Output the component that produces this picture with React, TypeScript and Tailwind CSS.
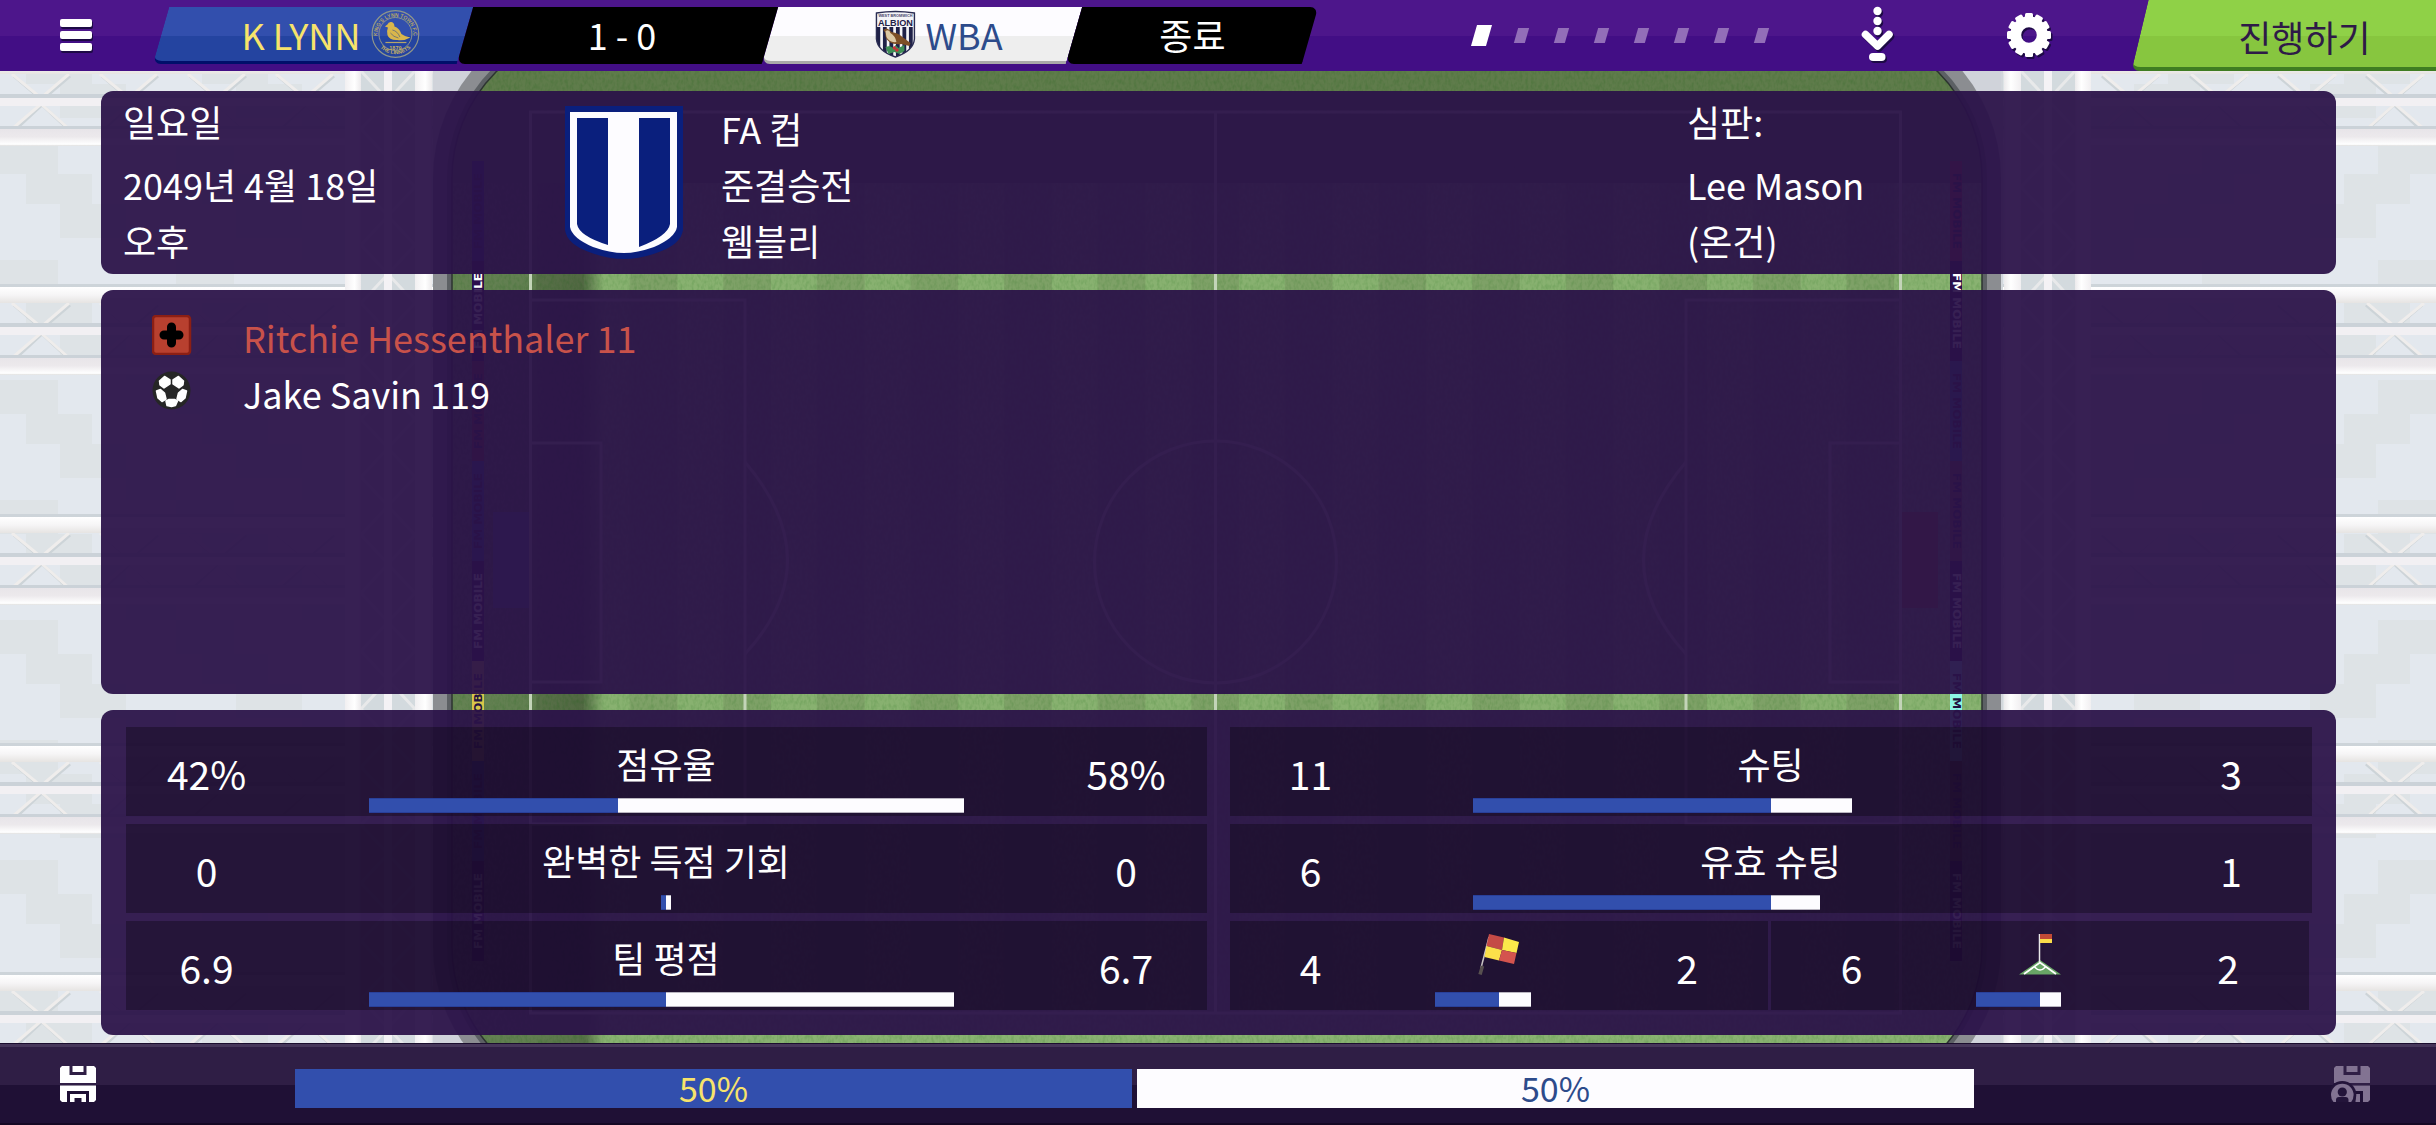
import React from 'react';

const TRUSS_ROWS = [58, 287, 517, 746, 975];
const TRUSS_X = [-1, 0, 1, 2, 3].map((i) => 41 + i * 88);
const BOARD_COLORS = ['#2a2a8a', '#2b0f4d', '#8a3a2a', '#2a5aa0', '#2b0f4d', '#d8c64a', '#2a5aa0', '#2b0f4d'];
const BOARD_COLORS_RIGHT = ['#b03030', '#2b0f4d', '#2a7aa0', '#8a5a3a', '#2b0f4d', '#8cf5e4', '#7a5a2a', '#2b0f4d'];

// One stand; the right stand is this one mirrored
const Stand = () => (
  <g>
    <rect x="0" y="71" width="433" height="975" fill="url(#seats)" />
    {TRUSS_ROWS.map((y) => (
      <g key={y}>
        <rect x="0" y={y - 3} width="433" height="3" fill="#cdd4d9" />
        {TRUSS_X.map((x) => (
          <g key={x} fill="none">
            <path d={`M${x - 27} ${y + 18}L${x + 1} ${y + 42}L${x + 29} ${y + 18}M${x - 27} ${y + 73}L${x + 1} ${y + 47}L${x + 29} ${y + 73}`} stroke="#cdd4d8" strokeWidth="3" />
            <path d={`M${x - 29} ${y + 16}L${x} ${y + 40}L${x + 28} ${y + 16}M${x - 29} ${y + 71}L${x} ${y + 46}L${x + 28} ${y + 71}`} stroke="#efedec" strokeWidth="3" />
          </g>
        ))}
        <rect x="0" y={y + 36} width="433" height="4" fill="#cbd2d8" />
        <rect x="0" y={y + 40} width="433" height="8" fill="#f2f0f3" />
        <rect x="0" y={y + 68} width="433" height="3" fill="#cbd2d8" />
        <rect x="0" y={y} width="433" height="16" fill="url(#pipeDown)" />
        <rect x="0" y={y + 71} width="433" height="17" fill="url(#pipeUp)" />
      </g>
    ))}
    <rect x="361" y="71" width="54" height="975" fill="#d3dade" />
    {Array.from({ length: 17 }, (_, i) => 71 + i * 58).map((y) => (
      <path key={y} d={`M361 ${y}L388 ${y + 29}L361 ${y + 58}M415 ${y}L388 ${y + 29}L415 ${y + 58}`} stroke="#e8e9ea" strokeWidth="3" fill="none" />
    ))}
    <rect x="384" y="71" width="8" height="975" fill="#f4f2f5" />
    <rect x="345" y="71" width="16" height="975" fill="url(#post)" />
    <rect x="415" y="71" width="17" height="975" fill="url(#post)" />
  </g>
);

const Boards = ({ x, rotate, colors, start }: { x: number; rotate: number; colors: string[]; start: number }) => (
  <g>
    {colors.map((color, i) => {
      const y = start + i * 100;
      return (
        <g key={i}>
          <rect x={x} y={y} width="12" height="100" fill={color} />
          <text
            x={x + 6}
            y={y + 50}
            transform={`rotate(${rotate} ${x + 6} ${y + 50})`}
            textAnchor="middle"
            dominantBaseline="central"
            fontFamily="'DejaVu Sans', sans-serif"
            fontWeight="700"
            fontSize="10"
            textLength="76"
            lengthAdjust="spacingAndGlyphs"
            fill={color === '#2b0f4d' ? '#ffffff' : '#221040'}
          >
            FM MOBILE
          </text>
        </g>
      );
    })}
  </g>
);

const Stadium = () => (
  <svg className="absolute inset-0" width="2436" height="1125" viewBox="0 0 2436 1125">
    <defs>
      <pattern id="seats" width="176" height="120" y="20" patternUnits="userSpaceOnUse">
        <rect width="176" height="120" fill="#e3e8ee" />
        <rect width="58" height="34" fill="#dee3e6" />
        <rect x="26" y="34" width="66" height="30" fill="#dee3e6" />
        <rect x="60" y="64" width="66" height="34" fill="#dee3e6" />
        <rect x="126" y="90" width="50" height="30" fill="#dee3e6" />
      </pattern>
      <linearGradient id="pipeDown" x1="0" y1="0" x2="0" y2="1">
        <stop offset="0" stopColor="#ffffff" />
        <stop offset=".5" stopColor="#f6f5f6" />
        <stop offset="1" stopColor="#e6e4e2" />
      </linearGradient>
      <linearGradient id="pipeUp" x1="0" y1="0" x2="0" y2="1">
        <stop offset="0" stopColor="#e8e5e9" />
        <stop offset=".45" stopColor="#ece9ec" />
        <stop offset=".9" stopColor="#ffffff" />
        <stop offset="1" stopColor="#dcdcdc" />
      </linearGradient>
      <linearGradient id="post" x1="0" y1="0" x2="1" y2="0">
        <stop offset="0" stopColor="#f1eff1" />
        <stop offset=".6" stopColor="#ffffff" />
        <stop offset="1" stopColor="#eceaec" />
      </linearGradient>
      <linearGradient id="standShade" x1="0" y1="0" x2="1" y2="0">
        <stop offset="0" stopColor="#000000" stopOpacity=".27" />
        <stop offset=".5" stopColor="#000000" stopOpacity=".29" />
        <stop offset=".88" stopColor="#000000" stopOpacity=".36" />
        <stop offset="1" stopColor="#000000" stopOpacity="0" />
      </linearGradient>
      <pattern id="mow" x="771" width="93.6" height="200" patternUnits="userSpaceOnUse">
        <rect width="94" height="200" fill="#7ea167" />
        <rect width="46" height="200" fill="#88b170" />
      </pattern>
      <filter id="grain" x="0" y="0" width="100%" height="100%">
        <feTurbulence type="fractalNoise" baseFrequency=".35 .2" numOctaves="2" seed="4" />
        <feColorMatrix values="0 0 0 0 0  0 0 0 0 0.1  0 0 0 0 0  0 0 0 -1.4 0.85" />
      </filter>
      <clipPath id="bowl">
        <rect x="452" y="28" width="1530" height="1069" rx="150" />
      </clipPath>
    </defs>
    <rect width="2436" height="1125" fill="#d3d7dc" />
    <Stand />
    <g transform="translate(2436 0) scale(-1 1)">
      <Stand />
    </g>
    <rect x="433" y="71" width="1568" height="975" fill="#d0d3da" />
    <rect x="433" y="10" width="1568" height="1105" rx="168" fill="#8b8d91" />
    <rect x="447" y="23" width="1540" height="1079" rx="155" fill="#5c6064" />
    <g clipPath="url(#bowl)">
      <rect x="452" y="0" width="1530" height="1125" fill="#89b271" />
      <rect x="530" y="180" width="1371" height="834" fill="url(#mow)" />
      <rect x="452" y="71" width="1530" height="112" fill="#5f7c4b" />
      <rect x="452" y="183" width="152" height="942" fill="url(#standShade)" />
      <rect x="452" y="71" width="1530" height="975" filter="url(#grain)" opacity=".22" />
      <g fill="none" stroke="#c3d4b8" strokeWidth="3">
        <rect x="530.5" y="112" width="1370" height="901" />
        <path d="M1215.5 112V1013" />
        <circle cx="1215.5" cy="562" r="121" />
        <path d="M530 300H745V824H530M1901 300H1686V824H1901" />
        <path d="M530 443H601V682H530M1901 443H1830V682H1901" />
        <path d="M745 462Q830 562 745 654M1686 462Q1601 562 1686 654" />
      </g>
      <rect x="493" y="512" width="36" height="96" fill="#5473a5" />
      <rect x="1902" y="512" width="36" height="96" fill="#a5603f" />
    </g>
    <rect x="452" y="28" width="1530" height="1069" rx="150" fill="none" stroke="#2c3330" strokeWidth="1.5" />
    <Boards x={472} rotate={-90} colors={BOARD_COLORS} start={161} />
    <Boards x={1950} rotate={90} colors={BOARD_COLORS_RIGHT} start={161} />
  </svg>
);

const MenuIcon = () => (
  <div className="flex flex-col gap-1">
    <span className="h-2 w-8 rounded-xs bg-white shadow-[1px_2px_0_#1d0a45]" />
    <span className="h-2 w-8 rounded-xs bg-white shadow-[1px_2px_0_#1d0a45]" />
    <span className="h-2 w-8 rounded-xs bg-white shadow-[1px_2px_0_#1d0a45]" />
  </div>
);

const LynnCrest = () => (
  <svg className="h-[48px] w-[48px] overflow-visible" viewBox="0 0 48 48" fill="none">
    <defs>
      <path id="ringTop" d="M6.500 29A18 18 0 1 1 41.500 29" />
      <path id="ringBottom" d="M6 34A21 21 0 0 0 42 34" />
    </defs>
    <circle cx="24" cy="24" r="23.300" stroke="#8f968a" strokeWidth="1.200" />
    <circle cx="24" cy="24" r="16.500" stroke="#8f968a" strokeWidth="1" />
    <text fill="#b5a56a" fontSize="5.500" fontWeight="700" fontFamily="'Liberation Sans', sans-serif">
      <textPath href="#ringTop" startOffset="50%" textAnchor="middle" textLength="58" lengthAdjust="spacingAndGlyphs">KING'S LYNN TOWN F.C</textPath>
    </text>
    <text fill="#c7b160" fontSize="5" fontWeight="700" fontFamily="'Liberation Sans', sans-serif">
      <textPath href="#ringBottom" startOffset="50%" textAnchor="middle" textLength="34" lengthAdjust="spacingAndGlyphs">THE LINNETS</textPath>
    </text>
    <path d="M13.500 16.500L16 14.500Q17 11.500 20 12Q23 12.500 23 16.500Q28 18 30 24Q34 27 39 27.500Q33 31 26 30Q18 30.500 16 25Q15 21 16.500 17.500Z" fill="#d9b64c" />
    <path d="M21 20Q26 21 28.500 27M19 23Q22 27 27 28" stroke="#5f6a78" strokeWidth=".8" />
    <path d="M14 32.500H35" stroke="#b5a56a" strokeWidth="1.200" />
    <text x="24" y="39.500" textAnchor="middle" fill="#c7b160" fontSize="5.500" fontWeight="700" fontFamily="'Liberation Sans', sans-serif">1879</text>
  </svg>
);

const AlbionCrest = () => (
  <svg className="h-[47px] w-[40px] overflow-visible" viewBox="0 0 40 47">
    <defs>
      <clipPath id="albion">
        <path d="M1 2Q20-1 39 2V28Q38 40 20 46Q2 40 1 28Z" />
      </clipPath>
    </defs>
    <g clipPath="url(#albion)">
      <rect width="40" height="47" fill="#f4f4f7" />
      {[1, 7.5, 14, 20.5, 27, 33.5].map((x) => (
        <rect key={x} x={x} y="16" width="3.800" height="31" fill="#1f2148" />
      ))}
    </g>
    <path d="M1 2Q20-1 39 2V28Q38 40 20 46Q2 40 1 28Z" fill="none" stroke="#2a2c52" strokeWidth="1.400" />
    <text x="20" y="6" textAnchor="middle" fontSize="4" fontWeight="700" textLength="34" lengthAdjust="spacingAndGlyphs" fill="#44466a" fontFamily="'Liberation Sans', sans-serif">WEST BROMWICH</text>
    <text x="20" y="14.500" textAnchor="middle" fontSize="9.500" fontWeight="700" textLength="35" lengthAdjust="spacingAndGlyphs" fill="#1f2148" fontFamily="'Liberation Sans', sans-serif">ALBION</text>
    <path d="M8 19Q11 16 14 19L16 21Q23 22 27 26L35 32L34 35L26 33Q19 34 14 31Q9 27 10 22Z" fill="#7d4f26" />
    <path d="M10 20Q14 18 15 22Q20 25 21 31Q14 32 11 26Z" fill="#dcc8a4" />
    <path d="M10 36L14 35L18 37L20 34L23 37L29 34L29 40L24 43L19 41L13 43Z" fill="#3f8f56" />
    <circle cx="19" cy="37" r="1.800" fill="#c9333a" />
    <circle cx="21.500" cy="39" r="1.800" fill="#c9333a" />
  </svg>
);

const DownIcon = () => (
  <svg className="h-[58px] w-[34px] overflow-visible" viewBox="0 0 34 58">
    {[{ c: '#1d0a45', t: 'translate(1.5 2)' }, { c: '#ffffff', t: 'translate(0 0)' }].map(({ c, t }) => (
      <g key={c} fill={c} transform={t}>
        <circle cx="17.500" cy="4" r="4.200" />
        <circle cx="17.500" cy="14" r="4.200" />
        <circle cx="17.500" cy="24" r="4.200" />
        <path d="M5.500 27.500L17.500 39L29 27.500" fill="none" stroke={c} strokeWidth="7.500" strokeLinecap="round" strokeLinejoin="round" />
        <rect x="9" y="46" width="16.500" height="8" rx="4" />
      </g>
    ))}
  </svg>
);

const GearIcon = () => (
  <svg className="h-[46px] w-[46px] overflow-visible" viewBox="0 0 46 46">
    {[{ c: '#1d0a45', t: 'translate(1.5 2)' }, { c: '#ffffff', t: 'translate(0 0)' }].map(({ c, t }) => (
      <g key={c} transform={t}>
        <circle cx="22" cy="22" r="13.300" fill="none" stroke={c} strokeWidth="11" />
        {Array.from({ length: 12 }, (_, i) => (
          <rect key={i} x="18" y="0" width="8" height="8" rx="1.500" fill={c} transform={`rotate(${i * 30} 22 22)`} />
        ))}
      </g>
    ))}
  </svg>
);

const Shield = () => (
  <svg className="h-[153px] w-[118px]" viewBox="0 0 118 153">
    <path d="M0 0H118V124Q116 138 94 146Q76 153 59 153Q42 153 24 146Q2 138 0 124Z" fill="#0a1f7d" />
    <path d="M5 6H112V121Q110 132 89 141Q72 147 59 147Q45 147 28 141Q7 132 5 121Z" fill="#fdfcff" />
    <path d="M12 12H43V139Q14 130 12 118ZM74 12H105V118Q103 130 74 141Z" fill="#0a1f7d" />
  </svg>
);

const InjuryIcon = () => (
  <svg className="h-10 w-10" viewBox="0 0 40 40">
    <rect x="1" y="1" width="37" height="38" rx="3" fill="#b8402f" stroke="#8c1f14" strokeWidth="2.500" />
    <path d="M19.500 12V28M12 20H27" stroke="#000000" strokeWidth="9" strokeLinecap="round" />
  </svg>
);

const BallIcon = () => (
  <svg className="h-10 w-10" viewBox="0 0 40 40">
    <circle cx="19.500" cy="19.500" r="19" fill="#262626" />
    <g fill="#ffffff" stroke="#ffffff" strokeWidth="1.500" strokeLinejoin="round">
      <path d="M7.500 10L12.500 5.500L18 9L18 13L12 17L8 14Z" />
      <path d="M31.500 10L26.500 5.500L21 9L21 13L27 17L31 14Z" />
      <path d="M4.500 20L8.500 18.500L12.500 22L14 28L10 30.500L6 27Z" />
      <path d="M34.500 20L30.500 18.500L26.500 22L25 28L29 30.500L33 27Z" />
      <path d="M14 30L17 28.500H22.500L25.500 30L23.500 34.500L19.500 35.500L15 34.500Z" />
    </g>
  </svg>
);

const FoulFlag = () => (
  <svg className="mb-1 h-[42px] w-[42px]" viewBox="0 0 42 42">
    <path d="M11 3L3 34" stroke="#c9c4c4" strokeWidth="1.500" />
    <path d="M4.500 32L2 40.500" stroke="#57504f" strokeWidth="3.500" />
    <path d="M11 0L26 3.500L24 16L8.500 12Z" fill="#c44b46" />
    <path d="M26 3.500L41 8L38.500 19L24 16Z" fill="#fbe94a" />
    <path d="M8.500 12L24 16L21 26.500L6.500 23Z" fill="#fbe04a" />
    <path d="M24 16L38.500 19L36 30L21 26.500Z" fill="#d4544e" />
  </svg>
);

const CornerFlag = () => (
  <svg className="mb-1 h-[42px] w-[42px]" viewBox="0 0 42 42">
    <path d="M21 26L42 40.500H0Z" fill="#68a666" />
    <path d="M5 40L21 28.500L37 40" fill="none" stroke="#ffffff" strokeWidth="1.800" />
    <path d="M15.500 33Q21 39 26.500 33" fill="none" stroke="#ffffff" strokeWidth="1.500" />
    <path d="M20.500 0V28" stroke="#e8e8e8" strokeWidth="1.500" />
    <rect x="21" y="0" width="12" height="5" fill="#c24a36" />
    <rect x="21" y="5" width="12" height="4" fill="#fbdc4a" />
  </svg>
);

const SaveIcon = ({ person }: { person?: boolean }) => (
  <svg className="h-[36px] w-[40px]" viewBox="0 0 40 36" fill={person ? '#827392' : '#ffffff'}>
    <path d="M5 0H12.500V9H29.500V0H37L39 2V17H3V2Z" />
    <path d="M15.500 0H26.500V6H15.500Z" />
    <path d="M3 19.500H39V34L37 36H32V25H10V36H5L3 34Z" />
    <path d="M13 28H29V36H24.500V32H17.500V36H13Z" />
    {person && (
      <>
        <circle cx="11.300" cy="29" r="14" fill="#23143a" />
        <circle cx="11.300" cy="29" r="11.300" />
        <circle cx="11.300" cy="26" r="4.600" fill="#23143a" />
        <path d="M5 36V34Q5 31 8 31H14.500Q17.500 31 17.500 34V36Z" fill="#23143a" />
      </>
    )}
  </svg>
);

interface SplitBarProps {
  home: number;
  away: number;
  start: number;
}

const SplitBar = ({ home, away, start }: SplitBarProps) => (
  <div className="flex h-[15px]" style={{ paddingLeft: start }}>
    <div className="border-y border-[#29409a] bg-[#324fad]" style={{ width: home }} />
    <div className="border-y border-[#b9b5c0] bg-[#fdfcff]" style={{ width: away }} />
  </div>
);

interface StatProps extends SplitBarProps {
  homeValue: string;
  awayValue: string;
  label: React.ReactNode;
}

const Stat = ({ homeValue, awayValue, label, home, away, start }: StatProps) => (
  <div className="flex h-[89px] flex-1 flex-col bg-black/30">
    <div className="flex h-[71px] items-start justify-between">
      <span className="w-[161px] pt-[18px] text-center text-[39px] leading-[56px]">{homeValue}</span>
      <span className="flex h-[60px] items-center pt-[11px] text-[36px] leading-[40px]">{label}</span>
      <span className="w-[162px] pt-[18px] text-center text-[39px] leading-[56px]">{awayValue}</span>
    </div>
    <SplitBar home={home} away={away} start={start} />
  </div>
);

const segment = 'flex h-[57px] -skew-x-[16deg] rounded-bl-lg border-b-[3px] text-[36px]';

export default function App() {
  return (
    <div className="relative flex h-[1125px] w-[2436px] flex-col overflow-hidden font-['Noto_Sans_CJK_KR',sans-serif] text-white">
      <Stadium />

      <header className="relative flex h-[71px] shrink-0 bg-[linear-gradient(#4d168b_36px,#420e85_36px)]">
        <div className="w-[161px] shrink-0 pt-[19px] pl-[60px]">
          <MenuIcon />
        </div>
        <div className="flex shrink-0 pt-[7px]">
          <div className={`${segment} w-[304px] border-[#000f6b] bg-[linear-gradient(#324fad_29px,#2444a0_29px)]`}>
            <div className="flex w-full skew-x-[16deg] items-center justify-end gap-[11px] pr-[46px] text-[#f7e36b]">
              <span>K LYNN</span>
              <LynnCrest />
            </div>
          </div>
          <div className={`${segment} w-[305px] border-black bg-black`}>
            <span className="flex w-full skew-x-[16deg] items-center justify-center pl-[8px]">1 - 0</span>
          </div>
          <div className={`${segment} w-[304px] border-[#a9a9a9] bg-[linear-gradient(#fdfcff_29px,#eeeeee_29px)]`}>
            <div className="flex w-full skew-x-[16deg] items-center gap-[10px] pl-[105px] text-[#2d4b8b]">
              <AlbionCrest />
              <span>WBA</span>
            </div>
          </div>
          <div className={`${segment} w-[236px] rounded-tr-lg border-black bg-black`}>
            <span className="flex w-full skew-x-[16deg] items-center justify-center">종료</span>
          </div>
        </div>
        <div className="flex shrink-0 items-center pl-[164px]">
          <span className="mr-[27px] h-[21px] w-[15px] -skew-x-[16deg] bg-white" />
          <div className="flex gap-[29px]">
            {Array.from({ length: 7 }, (_, i) => (
              <span key={i} className="h-[15px] w-[11px] -skew-x-[16deg] bg-[#926eb8]" />
            ))}
          </div>
        </div>
        <div className="shrink-0 pt-[7px] pl-[93px]">
          <DownIcon />
        </div>
        <div className="shrink-0 pt-[13px] pl-[113px]">
          <GearIcon />
        </div>
        <div className="-mr-[30px] ml-[87px] flex h-[71px] w-[326px] shrink-0 -skew-x-[13.5deg] rounded-bl-lg border-b-[4px] border-[#3f7d22] bg-[linear-gradient(#8fd147_36px,#87c63f_36px)]">
          <span className="flex w-full skew-x-[13.5deg] items-center justify-center pt-[5px] pl-[2px] text-[36px] text-[#2e1a47]">진행하기</span>
        </div>
      </header>

      <main className="relative flex flex-col gap-4 px-[101px] pt-5">
        <section className="flex h-[183px] w-[2235px] rounded-xl bg-[#2a1248]/94 text-[36px] leading-[56px]">
          <div className="w-[464px] pt-[2px] pl-[22px]">
            <p className="mb-[7px]">일요일</p>
            <p>2049년 4월 18일</p>
            <p>오후</p>
          </div>
          <div className="w-[156px] pt-[15px]">
            <Shield />
          </div>
          <div className="w-[966px] pt-[9px]">
            <p>FA 컵</p>
            <p>준결승전</p>
            <p>웸블리</p>
          </div>
          <div className="pt-[2px]">
            <p className="mb-[7px]">심판:</p>
            <p>Lee Mason</p>
            <p>(온건)</p>
          </div>
        </section>

        <section className="h-[404px] w-[2235px] rounded-xl bg-[#2a1248]/94 pt-[19px] pl-[51px] text-[36px] leading-[56px]">
          <div className="flex h-14 gap-[51px] text-[#c8524a]">
            <div className="pt-[6px]"><InjuryIcon /></div>
            <span>Ritchie Hessenthaler 11</span>
          </div>
          <div className="flex h-14 gap-[51px]">
            <div className="pt-[6px]"><BallIcon /></div>
            <span>Jake Savin 119</span>
          </div>
        </section>

        <section className="flex h-[325px] w-[2235px] gap-[23px] rounded-xl bg-[#2a1248]/94 pt-[17px] pl-[25px]">
          <div className="flex w-[1081px] flex-col gap-2">
            <div className="flex"><Stat homeValue="42%" awayValue="58%" label="점유율" start={243} home={249} away={346} /></div>
            <div className="flex"><Stat homeValue="0" awayValue="0" label="완벽한 득점 기회" start={535} home={5} away={5} /></div>
            <div className="flex"><Stat homeValue="6.9" awayValue="6.7" label="팀 평점" start={243} home={297} away={288} /></div>
          </div>
          <div className="flex w-[1082px] flex-col gap-2">
            <div className="flex"><Stat homeValue="11" awayValue="3" label="슈팅" start={243} home={298} away={81} /></div>
            <div className="flex"><Stat homeValue="6" awayValue="1" label="유효 슈팅" start={243} home={298} away={49} /></div>
            <div className="flex gap-[3px] pr-[3px]">
              <Stat homeValue="4" awayValue="2" label={<FoulFlag />} start={205} home={64} away={32} />
              <Stat homeValue="6" awayValue="2" label={<CornerFlag />} start={205} home={64} away={21} />
            </div>
          </div>
        </section>
      </main>

      <footer className="relative mt-auto flex h-[82px] shrink-0 border-t border-[#1b0d2e] bg-[linear-gradient(#46365a_3px,#2f1e45_3px,#2f1e45_41px,#1f1035_41px,#1f1035_79px,#150824_79px)]">
        <div className="w-[295px] pt-[22px] pl-[57px]">
          <SaveIcon />
        </div>
        <div className="flex gap-[5px] pt-[25px] text-[34px]">
          <div className="flex h-[39px] w-[837px] items-center justify-center bg-[#324fad] pb-[2px] text-[#f7e36b]">50%</div>
          <div className="flex h-[39px] w-[837px] items-center justify-center bg-[#fdfcff] pb-[2px] text-[#2d4b8b]">50%</div>
        </div>
        <div className="pt-[22px] pl-[357px]">
          <SaveIcon person />
        </div>
      </footer>
    </div>
  );
}
